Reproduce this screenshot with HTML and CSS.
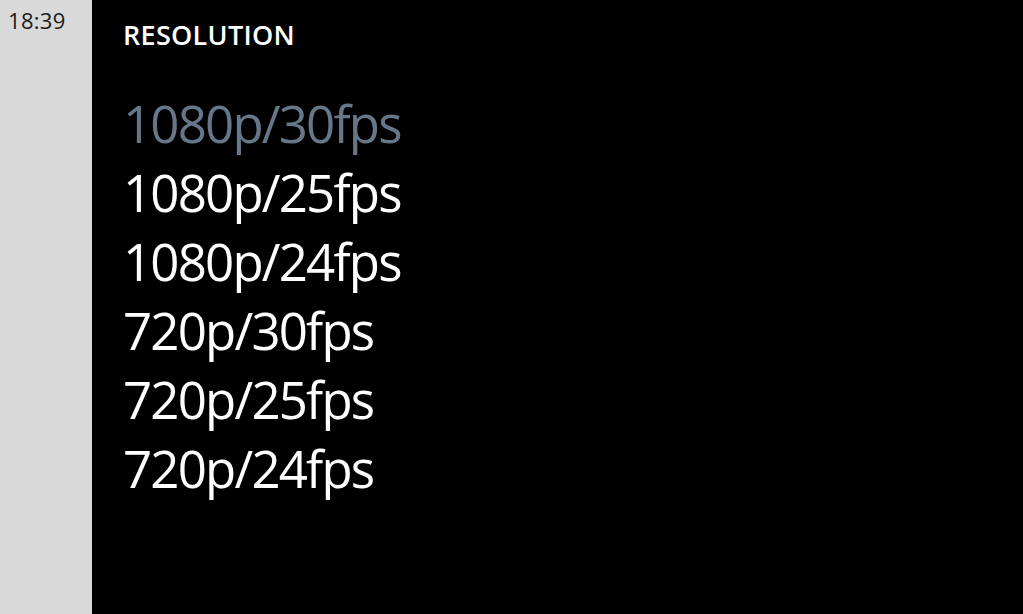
FILE: index.html
```html
<!DOCTYPE html>
<html lang="en">
<head>
    <meta charset="UTF-8">
    <meta name="viewport" content="width=device-width, initial-scale=1.0">
    <title>Resolution</title>
    <link rel="stylesheet" href="styles.css">
</head>
<body>
    <div class="screen">
        <aside class="status-bar">
            <span class="clock">18:39</span>
        </aside>
        <main class="picker">
            <h1 class="picker-title">RESOLUTION</h1>
            <ul class="option-list">
                <li class="option selected">1080p/30fps</li>
                <li class="option">1080p/25fps</li>
                <li class="option">1080p/24fps</li>
                <li class="option">720p/30fps</li>
                <li class="option">720p/25fps</li>
                <li class="option">720p/24fps</li>
            </ul>
        </main>
    </div>
</body>
</html>
```

FILE: styles.css
```css
/* General Styles */
body {
    margin: 0;
    font-family: 'Open Sans', 'Noto Sans', sans-serif;
    background: #000;
    overflow: hidden;
}

.screen {
    display: flex;
    height: 614px;
}

.status-bar {
    width: 92px;
    flex-shrink: 0;
    background: #d9d9d9;
    padding: 5px 0 0 8px;
    box-sizing: border-box;
}

.clock {
    font-size: 22px;
    letter-spacing: 0.3px;
    color: #1a1a1a;
}

.picker {
    flex: 1;
    padding: 16px 0 0 31px;
    color: #fff;
}

.picker-title {
    margin: 0;
    font-size: 27px;
    font-weight: 600;
    letter-spacing: 0.3px;
}

.option-list {
    list-style: none;
    margin: 36px 0 0;
    padding: 0;
}

.option {
    font-size: 51px;
    line-height: 69px;
    letter-spacing: -1.8px;
}

.option.selected {
    color: #66778a;
}
```
